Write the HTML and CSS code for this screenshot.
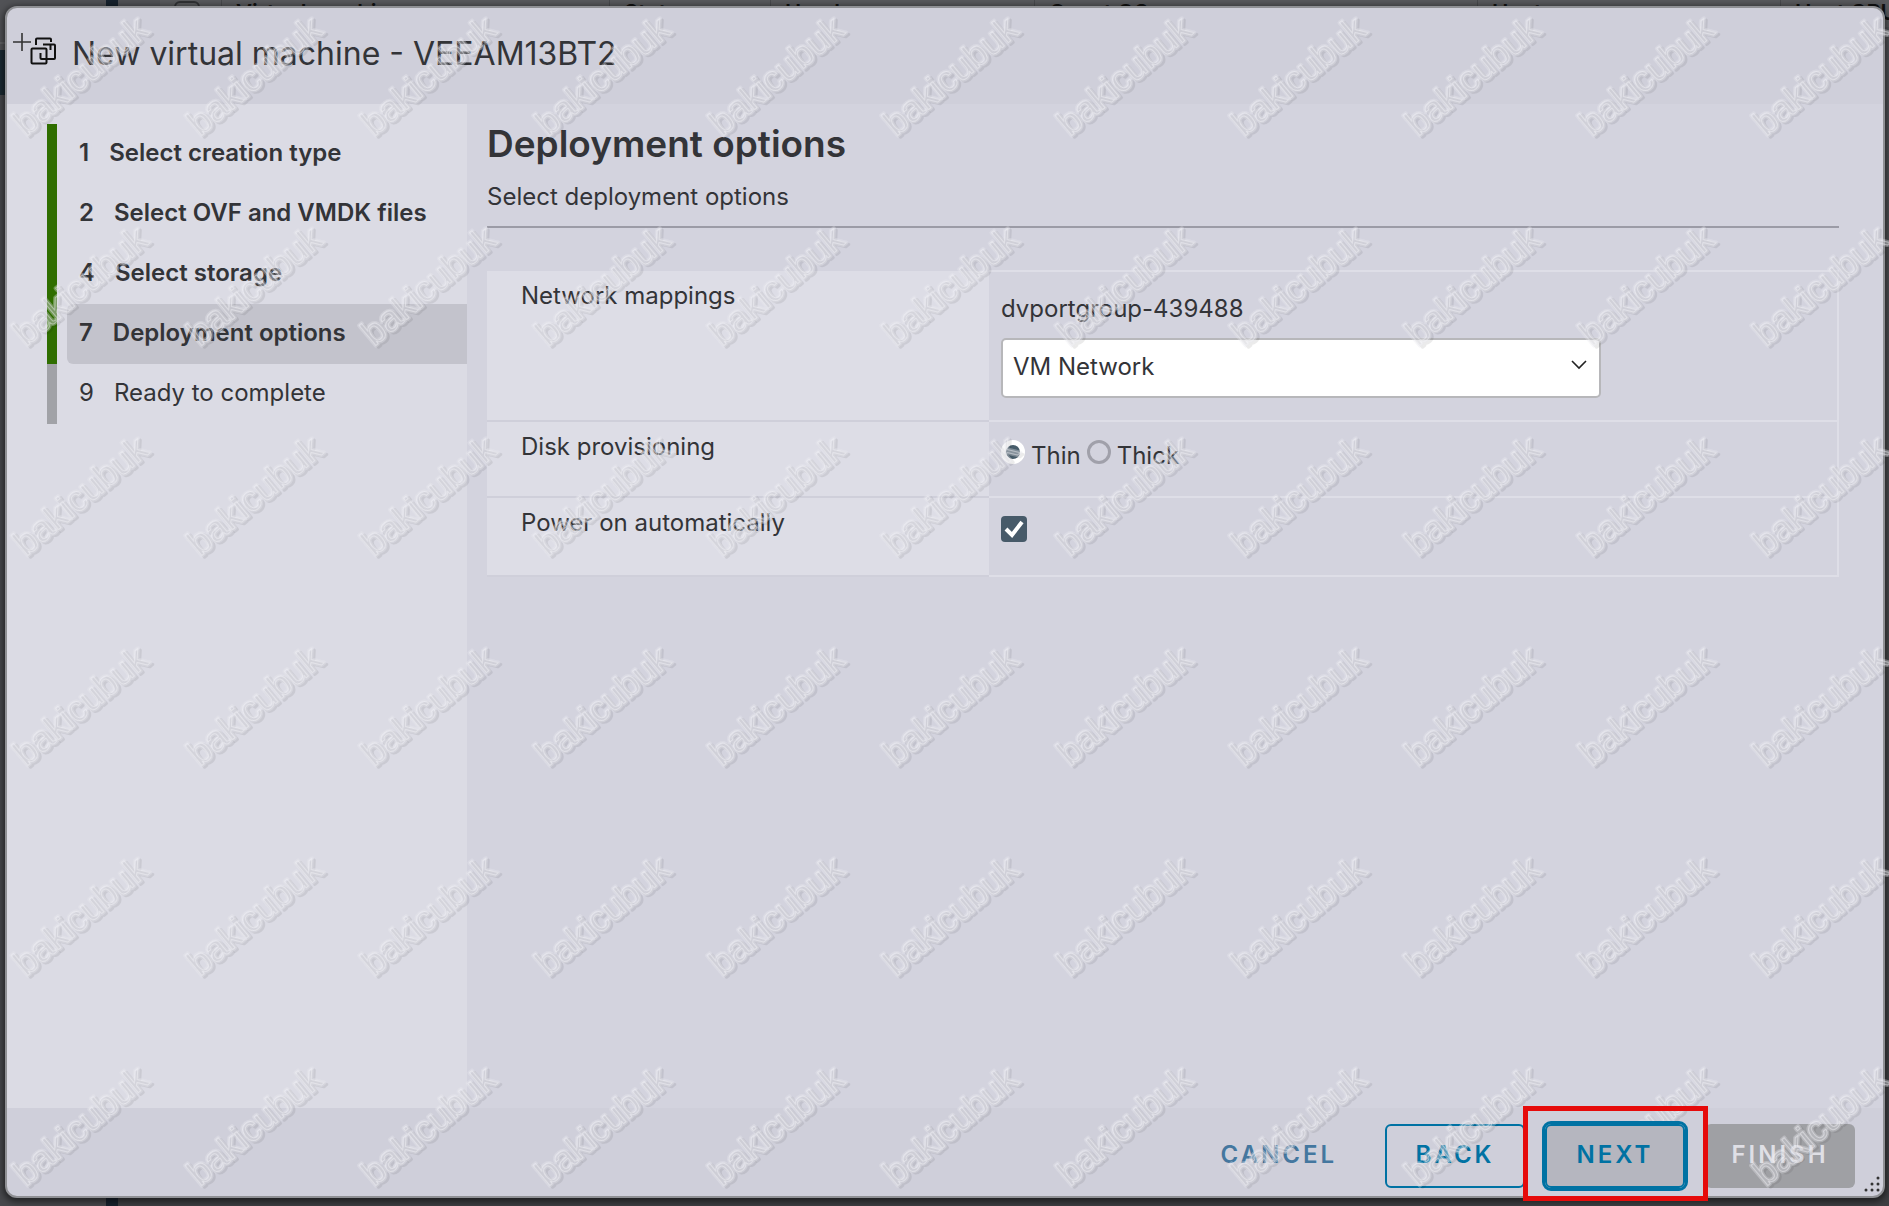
FILE: index.html
```html
<!DOCTYPE html>
<html lang="en">
<head>
<meta charset="utf-8">
<title>New virtual machine</title>
<link rel="stylesheet" href="styles.css">
</head>
<body>
<div class="host" aria-hidden="true">
  <div class="host-nav"></div>
  <div class="host-divider"></div>
  <div class="host-main">
    <div class="host-row">
      <span class="col col-check"><span class="host-box"></span></span>
      <span class="col col-name">Virtual machine</span>
      <span class="col col-status">Status</span>
      <span class="col col-used">Used space</span>
      <span class="col col-guest">Guest OS</span>
      <span class="col col-host">Host name</span>
      <span class="col col-cpu">Host CPU</span>
    </div>
  </div>
</div>

<main class="modal" role="dialog" aria-labelledby="title">
  <header class="modal-header">
    <svg class="vm-icon" width="40" height="36" viewBox="0 0 40 36" fill="none" stroke="#111" stroke-width="2">
      <path d="M0 10h18M9 1v18" stroke="#333" stroke-width="1.6"/>
      <rect x="18.500" y="16.500" width="15" height="15" rx="1"/>
      <path d="M23 13V7.500q0-1 1-1h13q1 0 1 1V10M37.500 18v-5.500M30 12.500h11q1 0 1 1v12.500q0 1-1 1H28.500q-1 0-1-1V21"/>
    </svg>
    <h1 id="title">New virtual machine - VEEAM13BT2</h1>
  </header>

  <div class="modal-body">
    <nav class="steps" aria-label="Steps">
      <ol>
        <li class="done"><span class="step"><span>1</span><span>Select creation type</span></span></li>
        <li class="done"><span class="step"><span>2</span><span>Select OVF and VMDK files</span></span></li>
        <li class="done"><span class="step"><span>4</span><span>Select storage</span></span></li>
        <li class="done current" aria-current="step"><span class="step"><span>7</span><span>Deployment options</span></span></li>
        <li><span class="step"><span>9</span><span>Ready to complete</span></span></li>
      </ol>
    </nav>

    <section class="content">
      <h2>Deployment options</h2>
      <p class="intro">Select deployment options</p>
      <table class="options">
        <tr>
          <th scope="row"><label for="network">Network mappings</label></th>
          <td class="network">
            <p>dvportgroup-439488</p>
            <span class="select-wrap">
              <select id="network"><option>VM Network</option></select>
              <svg class="chevron" width="16" height="10" viewBox="0 0 16 10" fill="none" stroke="#222" stroke-width="1.6"><path d="M1 1l7 7 7-7"/></svg>
            </span>
          </td>
        </tr>
        <tr class="row-disk">
          <th scope="row">Disk provisioning</th>
          <td>
            <div class="radios">
              <input type="radio" name="disk" id="thin" checked><label for="thin">Thin</label>
              <input type="radio" name="disk" id="thick"><label for="thick">Thick</label>
            </div>
          </td>
        </tr>
        <tr class="row-power">
          <th scope="row"><label for="power">Power on automatically</label></th>
          <td>
            <span class="check">
              <input type="checkbox" id="power" checked>
              <svg width="26" height="26" viewBox="0 0 26 26" fill="none" stroke="#fff" stroke-width="4"><path d="M5 13l6 6L21 6"/></svg>
            </span>
          </td>
        </tr>
      </table>
    </section>
  </div>

  <footer class="modal-footer">
    <button type="button" class="btn link">CANCEL</button>
    <button type="button" class="btn outline">BACK</button>
    <span class="marked"><button type="button" class="btn outline focus">NEXT</button></span>
    <button type="button" class="btn finish" disabled>FINISH</button>
    <svg class="grip" width="16" height="16" viewBox="0 0 16 16" fill="#333"><circle cx="14" cy="2" r="1.500"/><circle cx="14" cy="8" r="1.500"/><circle cx="8" cy="8" r="1.500"/><circle cx="14" cy="14" r="1.500"/><circle cx="8" cy="14" r="1.500"/><circle cx="2" cy="14" r="1.500"/></svg>
  </footer>
</main>

<svg class="watermark" width="100%" height="100%" aria-hidden="true">
  <defs>
    <pattern id="mark" width="174" height="210" patternUnits="userSpaceOnUse">
      <g class="mark-text" transform="translate(26 137) rotate(-40)">
        <text class="mark-shade" x="1" y="3">bakicubuk</text>
        <text class="mark-edge">bakicubuk</text>
        <text class="mark-face">bakicubuk</text>
      </g>
    </pattern>
  </defs>
  <rect width="100%" height="100%" fill="url(#mark)"/>
</svg>
</body>
</html>
```
FILE: styles.css
```css
* { box-sizing: border-box; }

body {
  margin: 0;
  height: 100vh;
  overflow: hidden;
  background: #47484c;
  color: #333438;
  font: 24px/36px Inter, "Liberation Sans", sans-serif;
}

h1, h2, p, ol { margin: 0; padding: 0; }

/* dimmed inventory page under the dialog */
.host { position: absolute; inset: 0; display: flex; overflow: hidden; }
.host-nav {
  flex: none;
  width: 106px;
  background: linear-gradient(#515256 42px, #606165 42px 44px, #515256 44px 50px, #1b2a33 50px 95px, #47484c 95px);
}
.host-divider { flex: none; width: 12px; background: #17222e; }
.host-main { flex: 1; min-width: 0; padding-left: 42px; background: linear-gradient(#505155 40px, #3e3f42); }
.host-row { display: flex; background: #58595c; color: #111; font-size: 22px; font-weight: 600; line-height: 24px; }
.col { flex: none; border-right: 1px solid #48494c; padding-left: 14px; white-space: nowrap; overflow: hidden; }
.col-check { width: 62px; padding-top: 1px; }
.host-box { display: block; width: 26px; height: 26px; border: 2px solid #303134; border-radius: 6px; }
.col-name { width: 388px; }
.col-status { width: 161px; }
.col-used { width: 264px; }
.col-guest { width: 443px; }
.col-host { width: 303px; }
.col-cpu { width: 160px; }

.modal {
  position: absolute;
  inset: 6px 4px 8px 5px;
  display: flex;
  flex-direction: column;
  border: 2px solid #8f9094;
  border-radius: 12px;
  background: #cfcfda;
  box-shadow: 0 2px 6px 2px rgba(0, 0, 0, .5);
}

.modal-header { display: flex; align-items: flex-start; height: 96px; padding: 24px 0 0 6px; }
.vm-icon { overflow: visible; margin-right: 19px; }
h1 { font-size: 32px; font-weight: 400; line-height: 44px; }

.modal-body { flex: 1; display: flex; background: #d3d3de; }

.steps { width: 460px; flex: none; padding: 20px 0 0 40px; background: #dbdbe4; }
.steps ol { list-style: none; }
.steps li { display: flex; height: 60px; border-left: 10px solid #a1a2a7; padding-left: 10px; }
.steps .done { border-left-color: #2f6e00; font-weight: 600; }
.step { flex: 1; display: flex; gap: 20px; align-items: center; padding: 0 0 2px 12px; border-radius: 6px 0 0 6px; }
.current .step { background: #c3c3cc; }

.content { flex: 1; padding: 16px 44px 0 20px; }
h2 { font-size: 37px; font-weight: 600; line-height: 48px; }
.intro { padding: 11px 0; border-bottom: 2px solid #9b9ba6; }

.options { width: 100%; margin-top: 42px; border-collapse: collapse; table-layout: fixed; }
.options th {
  width: 502px;
  padding: 7px 34px;
  border-bottom: 2px solid #cfcfda;
  background: #dddde6;
  font-weight: 400;
  text-align: left;
  vertical-align: top;
}
.options td { padding: 0 12px; border: 2px solid #dedee7; border-left: 0; vertical-align: top; }
.options .network { height: 150px; padding-top: 19px; }
.row-disk { height: 76px; }
.row-power { height: 79px; }

.select-wrap { position: relative; display: block; width: 600px; margin-top: 11px; }
select {
  appearance: none;
  width: 100%;
  height: 60px;
  padding: 0 40px 2px 10px;
  border: 2px solid #b7b7ba;
  border-radius: 5px;
  background: #fff;
  color: inherit;
  font: inherit;
}
.chevron { position: absolute; right: 14px; top: 22px; pointer-events: none; }

.radios { display: flex; align-items: flex-start; padding-top: 16px; }
.radios label { margin: 0 6px; }
input { appearance: none; margin: 0; }
.radios input { width: 24px; height: 24px; margin-top: 2px; border: 3px solid #a0a0aa; border-radius: 50%; }
.radios input:checked { border: 5px solid #fff; background: #475c6a; }
.check { position: relative; display: block; width: 26px; height: 26px; margin-top: 18px; }
.check input { display: block; width: 26px; height: 26px; border-radius: 4px; background: #475a69; }
.check svg { position: absolute; inset: 0; pointer-events: none; }

.modal-footer { position: relative; display: flex; justify-content: flex-end; align-items: flex-start; gap: 20px; height: 88px; padding: 16px 28px 0 0; }
.btn {
  display: block;
  height: 64px;
  padding: 0 26px 2px;
  border: 2px solid transparent;
  border-radius: 6px;
  background: none;
  color: #0072a3;
  font: 600 24px/36px Inter, "Liberation Sans", sans-serif;
  letter-spacing: 3px;
}
.link { color: #44779f; }
.outline { width: 140px; border-color: #0072a3; }
.focus { background: #b5b6bf; outline: 3px solid #0072a3; }
.finish { width: 150px; padding: 0 0 2px; background: #9fa0a4; color: #dfdfe5; }

/* red frame drawn over the Next button */
.marked { position: relative; z-index: 1; }
.marked::after { content: ""; position: absolute; inset: -18px -23px -13px -22px; border: 5px solid #e60b0b; pointer-events: none; }
.grip { position: absolute; right: 3px; bottom: 4px; }

.watermark { position: absolute; inset: 0; pointer-events: none; }
.mark-text { font: 36px "Liberation Sans", sans-serif; stroke-linejoin: round; }
.mark-shade { fill: none; stroke: #000; stroke-width: 3px; opacity: .08; }
.mark-edge { fill: none; stroke: #e8e8ee; stroke-width: 4px; opacity: .35; }
.mark-face { fill: #cfcfd8; fill-opacity: .3; stroke: #f2f2f6; stroke-width: 1px; opacity: .5; }
```
